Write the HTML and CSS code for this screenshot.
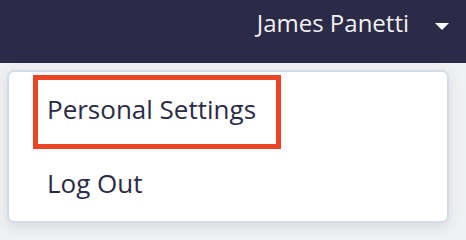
FILE: index.html
```html
<!DOCTYPE html>
<html lang="en">
<head>
<meta charset="utf-8">
<title>User menu</title>
<link rel="stylesheet" href="styles.css">
</head>
<body>
<header class="topbar">
  <span class="user-name">James Panetti</span>
  <span class="caret" aria-hidden="true"></span>
</header>
<main class="page">
  <nav class="menu">
    <a class="menu-item is-highlighted" href="#">Personal Settings</a>
    <a class="menu-item menu-item-last" href="#">Log Out</a>
  </nav>
</main>
</body>
</html>
```

FILE: styles.css
```css
html, body {
  margin: 0;
  padding: 0;
}

body {
  width: 466px;
  height: 236px;
  overflow: hidden;
  background: #f0f1f3;
  font-family: "Open Sans", "Noto Sans", sans-serif;
}

.topbar {
  height: 63px;
  box-sizing: border-box;
  background: #2b2a47;
  display: flex;
  justify-content: flex-end;
  align-items: flex-start;
  padding: 6px 17px 0 0;
}

.user-name {
  color: #f1f1f3;
  font-size: 24px;
  line-height: normal;
}

.caret {
  width: 0;
  height: 0;
  margin-left: 26px;
  margin-top: 17px;
  border-left: 7px solid transparent;
  border-right: 7px solid transparent;
  border-top: 7px solid #ffffff;
}

.page {
  padding: 7px 0 0 7px;
}

.menu {
  width: 442px;
  box-sizing: border-box;
  background: #ffffff;
  border: 2px solid #d3dde7;
  border-radius: 7px;
  box-shadow: 0 4px 14px rgba(40, 50, 70, 0.12);
  padding: 3px 0 0 24px;
  display: flex;
  flex-direction: column;
  align-items: flex-start;
}

.menu-item {
  display: flex;
  align-items: center;
  box-sizing: border-box;
  height: 74px;
  padding: 0 9px 6px 9px;
  border: 5px solid transparent;
  color: #2b2b47;
  font-size: 26px;
  text-decoration: none;
}

.menu-item-last {
  height: 72px;
  padding-bottom: 4px;
}

.menu-item.is-highlighted {
  width: 248px;
  border-color: #ec4327;
}
```
